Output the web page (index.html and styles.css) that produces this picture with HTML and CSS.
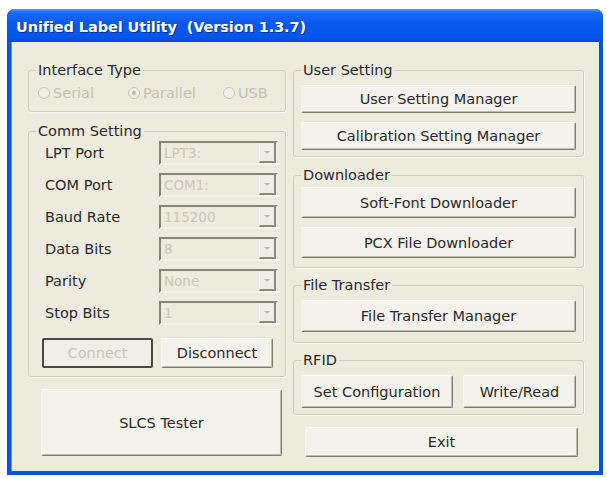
FILE: index.html
```html
<!DOCTYPE html>
<html>
<head>
<meta charset="utf-8">
<link rel="stylesheet" href="styles.css">
</head>
<body>
<div class="window">
  <div class="titlebar">Unified Label Utility&nbsp; (Version 1.3.7)</div>
  <div class="client">
    <div class="col left">
      <div class="group g-interface">
        <span class="group-title">Interface Type</span>
        <div class="body">
          <div class="radios">
            <span class="radio"><span class="dot"></span>Serial</span>
            <span class="radio"><span class="dot on"></span>Parallel</span>
            <span class="radio"><span class="dot"></span>USB</span>
          </div>
        </div>
      </div>
      <div class="group g-comm">
        <span class="group-title">Comm Setting</span>
        <div class="body">
          <div class="rows">
            <div class="row"><span class="lbl">LPT Port</span><span class="combo">LPT3:<span class="arrow"></span></span></div>
            <div class="row"><span class="lbl">COM Port</span><span class="combo">COM1:<span class="arrow"></span></span></div>
            <div class="row"><span class="lbl">Baud Rate</span><span class="combo">115200<span class="arrow"></span></span></div>
            <div class="row"><span class="lbl">Data Bits</span><span class="combo">8<span class="arrow"></span></span></div>
            <div class="row"><span class="lbl">Parity</span><span class="combo">None<span class="arrow"></span></span></div>
            <div class="row"><span class="lbl">Stop Bits</span><span class="combo">1<span class="arrow"></span></span></div>
          </div>
          <div class="conn">
            <button class="btn btn-connect">Connect</button>
            <button class="btn btn-disconnect">Disconnect</button>
          </div>
        </div>
      </div>
      <button class="btn btn-slcs">SLCS Tester</button>
    </div>
    <div class="col right">
      <div class="group g-user">
        <span class="group-title">User Setting</span>
        <div class="body stack">
          <button class="btn btn-wide h28">User Setting Manager</button>
          <button class="btn btn-wide h28">Calibration Setting Manager</button>
        </div>
      </div>
      <div class="group g-down">
        <span class="group-title">Downloader</span>
        <div class="body stack">
          <button class="btn btn-wide h31">Soft-Font Downloader</button>
          <button class="btn btn-wide h31">PCX File Downloader</button>
        </div>
      </div>
      <div class="group g-file">
        <span class="group-title">File Transfer</span>
        <div class="body">
          <button class="btn btn-wide h32">File Transfer Manager</button>
        </div>
      </div>
      <div class="group g-rfid">
        <span class="group-title">RFID</span>
        <div class="body rfid-row">
          <button class="btn btn-setcfg">Set Configuration</button>
          <button class="btn btn-wr">Write/Read</button>
        </div>
      </div>
      <button class="btn btn-exit">Exit</button>
    </div>
  </div>
</div>
</body>
</html>
```
FILE: styles.css
```css
html, body {
  margin: 0;
  padding: 0;
  background: #ffffff;
}
body {
  font-family: "DejaVu Sans", Verdana, sans-serif;
  font-size: 14.5px;
  color: #2a2a2a;
}
.window {
  margin: 9px 0 0 7px;
  width: 596px;
  height: 466px;
  border-radius: 8px 8px 0 0;
  overflow: hidden;
  display: flex;
  flex-direction: column;
  background: #0a52e0;
}
.titlebar {
  height: 33px;
  box-sizing: border-box;
  padding: 10px 0 0 9px;
  background: linear-gradient(#4a9cff 0%, #1a6cf5 10%, #0858ee 45%, #0656ec 85%, #0a48d0 100%);
  color: #ffffff;
  font-weight: bold;
  font-size: 14.5px;
  line-height: 17px;
  letter-spacing: -0.1px;
  text-shadow: 1px 1px 0 #0a2c8c;
  white-space: nowrap;
}
.client {
  flex: 1;
  margin: 0 4px 4px 4px;
  background: #ecebdd;
  display: flex;
  gap: 7px;
  padding: 0 16px;
  border-left: 1px solid #6d8fe6;
}
.col {
  display: flex;
  flex-direction: column;
}
.left { width: 258px; }
.right { width: 291px; }

.group {
  border: 1px solid #cfcdbd;
  border-radius: 3px;
  box-shadow: 1px 1px 0 #fbfaf4;
}
.group-title {
  display: block;
  width: fit-content;
  margin: -8px 0 0 7px;
  padding: 0 2px;
  line-height: 15px;
  background: #ecebdd;
  color: #2a2a2a;
}
.g-interface { margin-top: 28px; }
.g-interface .body { padding: 7px 0 10px 9px; }
.g-comm { margin-top: 19px; }
.g-comm .body { padding: 2px 7px 8px 16px; }

.radios {
  display: grid;
  grid-template-columns: 90px 95px auto;
  height: 16px;
  align-items: center;
  color: #c3c1b3;
}
.radio {
  display: flex;
  align-items: center;
  gap: 3px;
}
.dot {
  width: 10px;
  height: 10px;
  border: 1px solid #c6c4b6;
  border-radius: 50%;
  background: #f0efe6;
  position: relative;
}
.dot.on::after {
  content: "";
  position: absolute;
  left: 3px;
  top: 3px;
  width: 4px;
  height: 4px;
  border-radius: 50%;
  background: #bdbbad;
}

.rows {
  display: flex;
  flex-direction: column;
  gap: 8px;
}
.row {
  display: flex;
  align-items: center;
  height: 24px;
}
.lbl {
  width: 114px;
}
.combo {
  width: 119px;
  height: 24px;
  box-sizing: border-box;
  border: 2px solid;
  border-color: #86857c #eeede6 #f3f2ec #86857c;
  display: flex;
  align-items: center;
  padding-left: 3px;
  font-size: 13.5px;
  color: #c9c7ba;
}
.arrow {
  margin-left: auto;
  width: 17px;
  height: 20px;
  box-sizing: border-box;
  border-left: 1px solid #f6f5f0;
  border-right: 2px solid #8a897f;
  border-bottom: 2px solid #8a897f;
  background: #efeee6;
  display: flex;
  align-items: center;
  justify-content: center;
}
.arrow::after {
  content: "";
  border-left: 3px solid transparent;
  border-right: 3px solid transparent;
  border-top: 3px solid #b8b6a9;
}

.btn {
  font-family: inherit;
  font-size: 14.5px;
  color: #2a2a2a;
  background: #f3f2ec;
  border: 1px solid;
  border-color: #fbfbf8 #7e7d74 #7e7d74 #f6f5f0;
  box-shadow: inset -1px -1px 0 #bebcae;
  border-radius: 2px;
  padding: 0;
  margin: 0;
  cursor: default;
  white-space: nowrap;
}
.conn {
  display: flex;
  gap: 8px;
  margin-top: 13px;
  margin-left: -3px;
}
.btn-connect {
  width: 111px;
  height: 30px;
  border: 2px solid #4a4a44;
  box-shadow: none;
  color: #c9c7ba;
  background: #efeee7;
}
.btn-disconnect {
  width: 112px;
  height: 30px;
}
.btn-slcs {
  margin: 12px 0 0 13px;
  width: 241px;
  height: 67px;
}

.g-user { margin-top: 28px; }
.g-user .body { padding: 7px 7px 6px 7px; }
.g-down { margin-top: 18px; }
.g-down .body { padding: 4px 7px 9px 7px; }
.g-file { margin-top: 17px; }
.g-file .body { padding: 7px 7px 10px 7px; display: flex; }
.g-rfid { margin-top: 17px; }
.g-rfid .body { padding: 7px 7px 6px 7px; }
.stack {
  display: flex;
  flex-direction: column;
  gap: 9px;
}
.btn-wide { width: 275px; }
.h28 { height: 28px; }
.h31 { height: 31px; }
.h32 { height: 32px; }
.rfid-row {
  display: flex;
  gap: 10px;
}
.btn-setcfg { width: 152px; height: 33px; }
.btn-wr { width: 113px; height: 33px; }
.btn-exit {
  margin: 12px 0 0 12px;
  width: 273px;
  height: 30px;
}
```
